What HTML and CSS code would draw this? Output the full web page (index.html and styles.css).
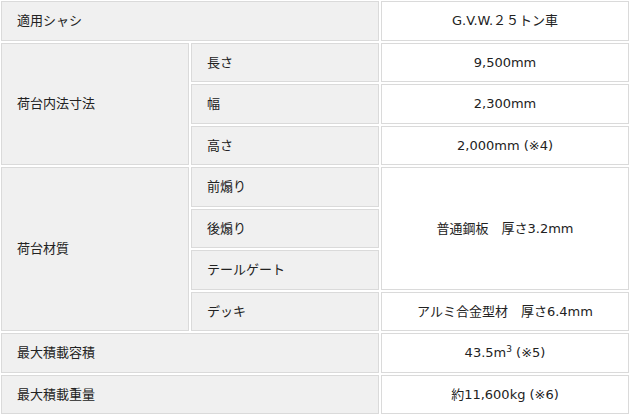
FILE: index.html
```html
<!DOCTYPE html>
<html lang="ja">
<head>
<meta charset="utf-8">
<link rel="stylesheet" href="styles.css">
</head>
<body>
<table class="spec">
  <colgroup>
    <col class="c1">
    <col class="c2">
    <col class="c3">
  </colgroup>
  <tr>
    <th class="head" colspan="2">適用シャシ</th>
    <td class="val">G.V.W.２５トン車</td>
  </tr>
  <tr>
    <th class="head" rowspan="3">荷台内法寸法</th>
    <th class="sub">長さ</th>
    <td class="val">9,500mm</td>
  </tr>
  <tr>
    <th class="sub">幅</th>
    <td class="val">2,300mm</td>
  </tr>
  <tr>
    <th class="sub">高さ</th>
    <td class="val">2,000mm (※4)</td>
  </tr>
  <tr>
    <th class="head" rowspan="4">荷台材質</th>
    <th class="sub">前煽り</th>
    <td class="val" rowspan="3">普通鋼板　厚さ3.2mm</td>
  </tr>
  <tr>
    <th class="sub">後煽り</th>
  </tr>
  <tr>
    <th class="sub">テールゲート</th>
  </tr>
  <tr>
    <th class="sub">デッキ</th>
    <td class="val">アルミ合金型材　厚さ6.4mm</td>
  </tr>
  <tr>
    <th class="head" colspan="2">最大積載容積</th>
    <td class="val">43.5m<sup>3</sup> (※5)</td>
  </tr>
  <tr>
    <th class="head" colspan="2">最大積載重量</th>
    <td class="val">約11,600kg (※6)</td>
  </tr>
</table>
</body>
</html>
```

FILE: styles.css
```css
html, body {
  margin: 0;
  padding: 0;
  background: #fff;
  overflow: hidden;
}
body {
  font-family: "DejaVu Sans", "Noto Sans CJK JP", sans-serif;
  font-size: 13px;
  color: #222;
}
.spec {
  width: 632px;
  border-collapse: separate;
  border-spacing: 2px;
  margin: -1px 0 0 -1px;
  table-layout: fixed;
}
.spec .c1 { width: 188px; }
.spec .c2 { width: 188px; }
.spec th, .spec td {
  border: 1px solid #dadada;
  padding: 9px 15px;
  line-height: 19.5px;
  height: 19.5px;
  font-weight: normal;
  text-align: left;
  white-space: nowrap;
}
.spec th {
  background: #f0f0f0;
}
.spec .val {
  text-align: center;
  background: #fff;
}
.spec sup {
  font-size: 9px;
  line-height: 0;
  vertical-align: 5px;
}
```
